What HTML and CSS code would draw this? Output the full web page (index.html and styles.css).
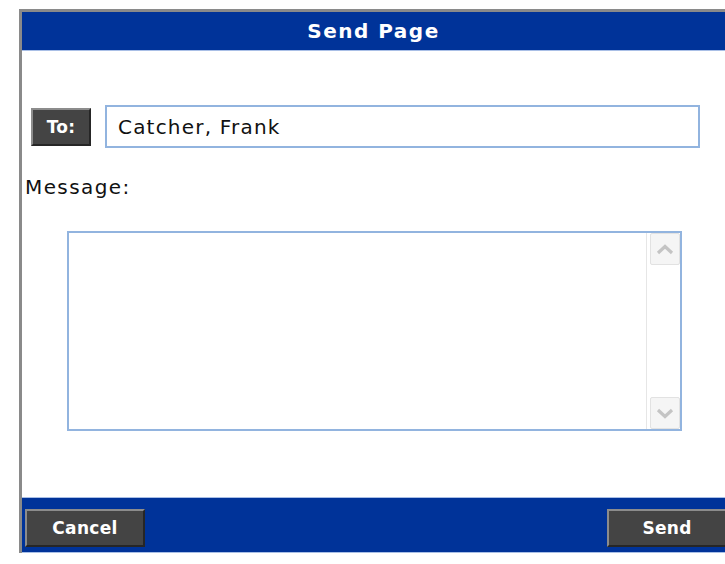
FILE: index.html
```html
<!DOCTYPE html>
<html lang="en">
<head>
<meta charset="utf-8">
<title>Send Page</title>
<link rel="stylesheet" href="styles.css">
</head>
<body>
<div class="dialog">
  <div class="titlebar">
    <h1 class="title">Send Page</h1>
  </div>

  <div class="content">
    <div class="to-row">
      <button class="btn btn-to" type="button">To:</button>
      <input class="to-input" type="text" value="Catcher, Frank">
    </div>

    <label class="msg-label" for="msg">Message:</label>

    <div class="msg-box">
      <textarea class="msg-text" id="msg"></textarea>
      <div class="scrollbar">
        <span class="sb-btn">
          <svg width="18" height="11" viewBox="0 0 18 11"><path d="M2 9 L9 2.5 L16 9" fill="none" stroke="#c4c4c4" stroke-width="3.2"/></svg>
        </span>
        <span class="sb-btn">
          <svg width="18" height="11" viewBox="0 0 18 11"><path d="M2 2 L9 8.5 L16 2" fill="none" stroke="#c4c4c4" stroke-width="3.2"/></svg>
        </span>
      </div>
    </div>
  </div>

  <div class="footer">
    <button class="btn btn-footer" type="button">Cancel</button>
    <button class="btn btn-footer btn-send" type="button">Send</button>
  </div>
</div>
</body>
</html>
```

FILE: styles.css
```css
html, body {
  margin: 0;
  overflow: hidden;
  background: #ffffff;
}

body {
  padding-top: 9px;
  font-family: "DejaVu Sans", Verdana, sans-serif;
}

/* dialog frame: grey rule on the top and left edges */
.dialog {
  margin-left: 19px;
  width: 703px;
  border-top: 3px solid #8a8a8a;
  border-left: 3px solid #8a8a8a;
}

.titlebar {
  height: 38px;
  background: #003399;
  border-bottom: 1px solid #a9bfe6;
}

.title {
  margin: 0;
  text-align: center;
  color: #ffffff;
  font-size: 20px;
  font-weight: bold;
  letter-spacing: 1.5px;
  line-height: 38px;
}

.content {
  height: 446px;
  display: flex;
  flex-direction: column;
  align-items: flex-start;
}

.to-row {
  margin-top: 54px;
  margin-left: 9px;
  display: flex;
  align-items: center;
  gap: 14px;
}

/* dark bevelled buttons */
.btn {
  background: #444444;
  color: #ffffff;
  font-family: "DejaVu Sans", Verdana, sans-serif;
  font-weight: bold;
  font-size: 17px;
  letter-spacing: 0.3px;
  border-style: solid;
  border-width: 2px;
  border-color: #8c8c8c #262626 #262626 #8c8c8c;
  padding: 0;
  cursor: pointer;
}

.btn-to {
  width: 60px;
  height: 38px;
}

.to-input {
  box-sizing: border-box;
  width: 595px;
  height: 43px;
  border: 2px solid #92b4df;
  padding: 0 0 0 11px;
  font-family: "DejaVu Sans", Verdana, sans-serif;
  font-size: 20px;
  letter-spacing: 1.2px;
  color: #111111;
  outline: none;
}

.msg-label {
  margin-top: 28px;
  margin-left: 3px;
  font-size: 20px;
  line-height: 22px;
  letter-spacing: 1.4px;
  color: #111111;
}

.msg-box {
  box-sizing: border-box;
  margin-top: 33px;
  margin-left: 45px;
  width: 615px;
  height: 200px;
  border: 2px solid #92b4df;
  display: flex;
}

.msg-text {
  flex: 1;
  border: none;
  resize: none;
  outline: none;
  overflow: hidden;
  padding: 4px;
  font-family: "DejaVu Sans", Verdana, sans-serif;
  font-size: 16px;
}

/* faint scrollbar column with arrow buttons */
.scrollbar {
  width: 33px;
  border-left: 1px solid #e6e6e6;
  display: flex;
  flex-direction: column;
  justify-content: space-between;
  align-items: flex-end;
}

.sb-btn {
  box-sizing: border-box;
  width: 30px;
  height: 32px;
  background: #f5f5f5;
  border: 1px solid #e2e2e2;
  border-radius: 2px;
  display: flex;
  align-items: center;
  justify-content: center;
}

.footer {
  height: 54px;
  background: #003399;
  border-top: 1px solid #a9bfe6;
  border-bottom: 1px solid #a9bfe6;
  display: flex;
  justify-content: space-between;
  align-items: flex-start;
  padding-left: 3px;
}

.btn-footer {
  width: 120px;
  height: 38px;
  margin-top: 11px;
}

.btn-send {
  margin-right: -2px;
}
```
